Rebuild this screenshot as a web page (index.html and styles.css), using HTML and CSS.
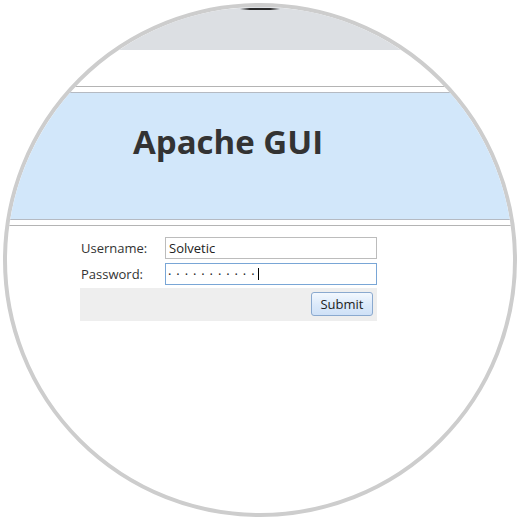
FILE: index.html
```html
<!DOCTYPE html>
<html>
<head>
<meta charset="utf-8">
<link rel="stylesheet" href="styles.css">
</head>
<body>
<div class="frame">
  <div class="lens">
    <div class="topbar"></div>
    <div class="spacer"></div>
    <div class="header">
      <div class="banner"><h1 class="title">Apache GUI</h1></div>
    </div>
    <form class="login">
      <label class="lbl">Username:</label>
      <div class="field">Solvetic</div>
      <label class="lbl">Password:</label>
      <div class="field focus"><span class="dots">···········</span><span class="caret"></span></div>
      <div class="actions"><button type="button" class="btn">Submit</button></div>
    </form>
  </div>
  <div class="notch"></div>
</div>
</body>
</html>
```
FILE: styles.css
```css
html, body { margin: 0; padding: 0; background: #fff; }
.frame { position: relative; width: 520px; height: 520px; }
.lens {
  box-sizing: border-box;
  width: 514px; height: 514px;
  margin: 3px;
  border: 4px solid #cdcdcd;
  border-radius: 50%;
  overflow: hidden;
  background: #fff;
  display: flex; flex-direction: column;
}
.notch {
  position: absolute; top: 5px; left: 240px; width: 40px; height: 2px;
  background: linear-gradient(to right, rgba(40,40,40,0), #2a2a2a 25%, #2a2a2a 75%, rgba(40,40,40,0));
}
.topbar { height: 43px; background: #dcdfe3; flex: none; }
.spacer { height: 36px; flex: none; }
.header {
  flex: none;
  border-top: 1px solid #b4b4b4;
  border-bottom: 1px solid #b4b4b4;
  padding: 5px 0;
}
.banner {
  height: 126px;
  background: #d2e7fa;
  border-top: 1px solid #b5bac2;
  border-bottom: 1px solid #b5bac2;
  box-sizing: content-box;
}
.title {
  margin: 0;
  padding: 32px 0 0 126px;
  font-family: "Open Sans", sans-serif;
  font-weight: 700;
  font-size: 33px;
  line-height: 33px;
  color: #333;
}
.login {
  margin: 11px 0 0 73px;
  width: 297px;
  display: grid;
  grid-template-columns: 85px 212px;
  row-gap: 4px;
  font-family: "Open Sans", sans-serif;
  font-size: 13px;
  color: #333;
}
.lbl { padding-left: 1px; line-height: 22px; align-self: center; }
.field {
  box-sizing: border-box;
  height: 22px;
  border: 1px solid #bcbcbc;
  padding: 0 3px;
  line-height: 20px;
  color: #222;
  display: flex; align-items: center;
}
.field.focus { border-color: #79a6d6; padding-left: 2px; }
.dots { letter-spacing: 4.9px; color: #222; }
.caret { display: inline-block; width: 0; height: 12px; border-left: 1px solid #000; margin-left: -1px; }
.actions {
  grid-column: 1 / 3;
  margin-top: -1px;
  background: #eeeeee;
  display: flex; justify-content: flex-end;
  padding: 4px 4px 5px 0;
}
.btn {
  box-sizing: border-box;
  width: 62px; height: 24px;
  padding: 0;
  border: 1px solid #8aa9cf;
  border-radius: 3px;
  background: linear-gradient(#f3f8fe, #dbe9fa 55%, #cfe1f7);
  font-family: "Open Sans", sans-serif;
  font-size: 13px;
  color: #222;
}
```
